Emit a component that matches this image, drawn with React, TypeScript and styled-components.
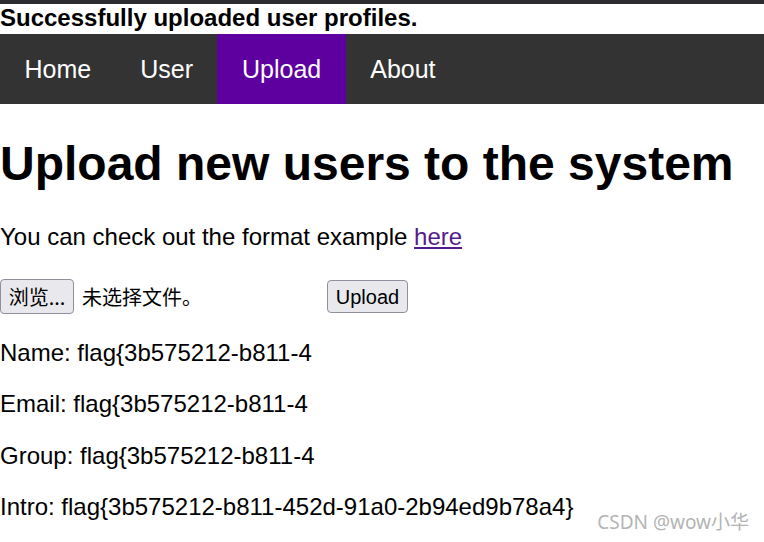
import React from "react";
import styled, { createGlobalStyle } from "styled-components";

const Global = createGlobalStyle`
  html, body { margin: 0; padding: 0; background: #ffffff; }
  body { font-family: "Liberation Sans", Arial, sans-serif; color: #000; }
`;

const Page = styled.div`
  position: relative;
  width: 764px;
  height: 542px;
  overflow: hidden;
`;

const TopStrip = styled.div`
  height: 4px;
  background: #2c2c31;
`;

const Message = styled.div`
  height: 30px;
  font-size: 24px;
  font-weight: bold;
  line-height: 27.6px;
  white-space: nowrap;
`;

const Nav = styled.ul`
  display: flex;
  margin: 0;
  padding: 0;
  list-style: none;
  height: 70px;
  background: #333333;
`;

const NavItem = styled.li<{ $active?: boolean }>`
  display: flex;
  align-items: center;
  padding: 0 24.5px;
  font-size: 25px;
  color: #ffffff;
  background: ${(p) => (p.$active ? "#5e00a0" : "transparent")};
`;

const Title = styled.h1`
  margin: 32px 0 32px;
  font-size: 48px;
  line-height: 55px;
  font-weight: bold;
  white-space: nowrap;
`;

const Para = styled.p`
  margin: 24px 0;
  font-size: 24px;
  line-height: 27.6px;
  white-space: nowrap;
`;

const Link = styled.a`
  color: #551a8b;
  text-decoration: underline;
`;

const Form = styled.form`
  display: flex;
  align-items: center;
  height: 40px;
  padding-top: 4px;
  box-sizing: border-box;
`;

const FileWidget = styled.div`
  display: flex;
  align-items: center;
  width: 327px;
`;

const NativeButton = styled.button<{ $cjk?: boolean }>`
  box-sizing: border-box;
  height: ${(p) => (p.$cjk ? "35px" : "33px")};
  width: ${(p) => (p.$cjk ? "74px" : "81px")};
  padding: 0;
  font-family: ${(p) =>
    p.$cjk
      ? '"Noto Sans CJK SC", "Liberation Sans", sans-serif'
      : '"Liberation Sans", Arial, sans-serif'};
  font-size: 20px;
  color: #000;
  background: #e9e9ed;
  border: 1px solid #8f8f9d;
  border-radius: 4px;
  line-height: 1;
  white-space: nowrap;
`;

const FileLabel = styled.span`
  margin-left: 8px;
  font-family: "Noto Sans CJK SC", sans-serif;
  font-size: 20px;
  line-height: 1;
  white-space: nowrap;
`;

const Watermark = styled.div`
  position: absolute;
  right: 15px;
  bottom: 7px;
  font-family: "Noto Sans", "Noto Sans CJK SC", sans-serif;
  font-size: 19px;
  color: #b4b4b4;
  white-space: nowrap;
`;

export default function App() {
  return (
    <Page>
      <Global />
      <TopStrip />
      <Message>Successfully uploaded user profiles.</Message>
      <Nav>
        <NavItem>Home</NavItem>
        <NavItem>User</NavItem>
        <NavItem $active>Upload</NavItem>
        <NavItem>About</NavItem>
      </Nav>
      <Title>Upload new users to the system</Title>
      <Para>
        You can check out the format example <Link href="#">here</Link>
      </Para>
      <Form onSubmit={(e) => e.preventDefault()}>
        <FileWidget>
          <NativeButton type="button" $cjk>
            浏览...
          </NativeButton>
          <FileLabel>未选择文件。</FileLabel>
        </FileWidget>
        <NativeButton type="submit">Upload</NativeButton>
      </Form>
      <Para>Name: flag{"{"}3b575212-b811-4</Para>
      <Para>Email: flag{"{"}3b575212-b811-4</Para>
      <Para>Group: flag{"{"}3b575212-b811-4</Para>
      <Para>Intro: flag{"{"}3b575212-b811-452d-91a0-2b94ed9b78a4{"}"}</Para>
      <Watermark>CSDN @wow小华</Watermark>
    </Page>
  );
}
